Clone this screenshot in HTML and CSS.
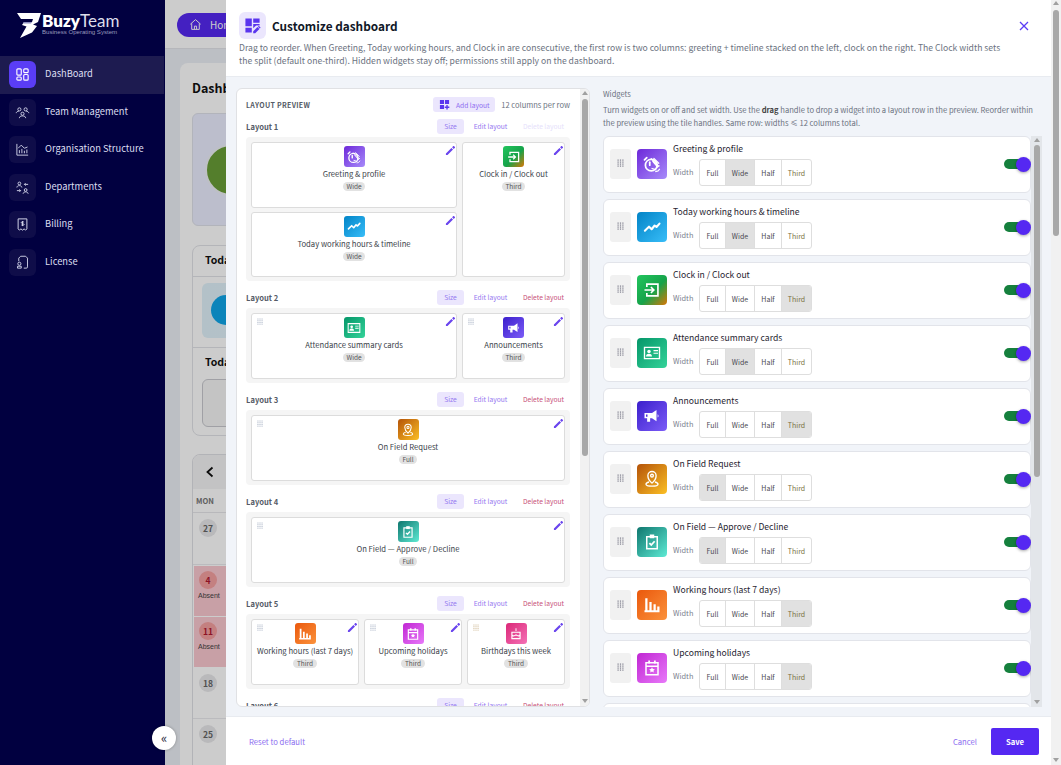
FILE: index.html
```html
<!DOCTYPE html>
<html lang="en">
<head>
<meta charset="utf-8">
<title>Customize dashboard</title>
<link rel="stylesheet" href="styles.css">
</head>
<body>
<svg class="sprite" width="0" height="0">
  <defs>
    <symbol id="i-pen" viewBox="0 0 24 24"><path fill="currentColor" d="M2 18.500V22h3.500L17.500 10l-3.500-3.500L2 18.500zM21.700 5.800a1 1 0 0 0 0-1.400l-2.100-2.100a1 1 0 0 0-1.400 0L15.500 5l3.500 3.500 2.700-2.700z"/></symbol>
    <symbol id="i-greet" viewBox="0 0 24 24"><g fill="none" stroke="currentColor" stroke-linecap="round"><circle cx="11" cy="13.500" r="7.800" stroke-width="2.300"/><path d="M9 13.500V9.500" stroke-width="2.400"/><path d="M5 3.500 2 6.500" stroke-width="2.300"/><path d="M11 5l9 9M14.500 4.500l6.500 6.500M13 8.500l6.500 7.500M12 18l5 1.500M19 16l2.500-1.500M17 22c2 0 4-1 5-3" stroke-width="1.700"/></g></symbol>
    <symbol id="i-trend" viewBox="0 0 24 24"><path fill="none" stroke="currentColor" stroke-width="2.800" stroke-linecap="round" stroke-linejoin="round" d="M2.500 17l5.500-5.500 3.500 3.500 4-5 2.500 2 4-4.500"/></symbol>
    <symbol id="i-in" viewBox="0 0 24 24"><path fill="currentColor" d="M4 3h17v18H4v-5h2.200v2.800h12.600V5.200H6.200V8H4V3zm7.300 4.300L16 12l-4.700 4.700-1.500-1.500 2.100-2.100H2v-2.200h9.900L9.800 8.800l1.500-1.500z"/></symbol>
    <symbol id="i-card" viewBox="0 0 24 24"><path fill="none" stroke="currentColor" stroke-width="1.800" d="M2 4.500h20v15H2z"/><circle cx="8" cy="10" r="2.300" fill="currentColor"/><path fill="currentColor" d="M4 16.500c0-2.500 2-3.500 4-3.500s4 1 4 3.500H4zM14 8h6v1.600h-6zM14 11.500h6v1.600h-6z"/></symbol>
    <symbol id="i-mega" viewBox="0 0 24 24"><path fill="currentColor" d="M2 8h10l6-4v15l-6-4H9.500v4.500H5.500V15H2V8zm17.500 1.500c1.600 1 1.600 3.500 0 4.500V9.500z"/><path fill="#4f2ee0" d="M4 10h2v3H4z"/></symbol>
    <symbol id="i-pin" viewBox="0 0 24 24"><g fill="none" stroke="currentColor" stroke-width="1.800"><path d="M12 17.500S6.500 12.500 6.500 7.500a5.500 5.500 0 0 1 11 0c0 5-5.500 10-5.500 10z"/><circle cx="12" cy="7.500" r="1.800"/><path d="M8 16c-2.500.6-4 1.500-4 3 0 1.500 3 2.500 8 2.500s8-1 8-2.500c0-1.500-1.500-2.400-4-3"/></g></symbol>
    <symbol id="i-clip" viewBox="0 0 24 24"><path fill="none" stroke="currentColor" stroke-width="2" d="M5 5h14v16H5z"/><path fill="currentColor" d="M9 2h6v5H9z"/><path fill="none" stroke="currentColor" stroke-width="2.400" d="M8.500 13.500l2.500 2.500 4.500-5"/></symbol>
    <symbol id="i-bars" viewBox="0 0 24 24"><path fill="currentColor" d="M3 3h3v16H3zM8.500 8h3v11h-3zM14 11h3v8h-3zM2 19h20v2.500H2zM19 14h3v5h-3z"/></symbol>
    <symbol id="i-cal" viewBox="0 0 24 24"><path fill="none" stroke="currentColor" stroke-width="2" d="M4 5h16v16H4zM4 9.500h16"/><path fill="currentColor" d="M7 2h2.400v4H7zM14.600 2H17v4h-2.400zM12 11l1.200 2.400 2.600.3-1.900 1.800.5 2.600-2.400-1.300-2.400 1.300.5-2.600-1.900-1.800 2.600-.3z"/></symbol>
    <symbol id="i-cake" viewBox="0 0 24 24"><path fill="currentColor" d="M11.200 2h1.600v5h-1.600zM4 8h16v13H4zm2 2v3.500c1.500 1 2.500 1 4 0s2.500-1 4 0 2.500 1 4 0V10H6zm0 6v3h12v-3c-1.500.6-2.500.5-4-.4s-2.500-.9-4 0-2.500 1-4 .4z"/></symbol>
    <symbol id="i-grip" viewBox="0 0 7 8"><g fill="currentColor"><rect x="0.500" y="0.500" width="1.200" height="1.200"/><rect x="2.900" y="0.500" width="1.200" height="1.200"/><rect x="5.300" y="0.500" width="1.200" height="1.200"/><rect x="0.500" y="2.500" width="1.200" height="1.200"/><rect x="2.900" y="2.500" width="1.200" height="1.200"/><rect x="5.300" y="2.500" width="1.200" height="1.200"/><rect x="0.500" y="4.500" width="1.200" height="1.200"/><rect x="2.900" y="4.500" width="1.200" height="1.200"/><rect x="5.300" y="4.500" width="1.200" height="1.200"/><rect x="0.500" y="6.500" width="1.200" height="1.200"/><rect x="2.900" y="6.500" width="1.200" height="1.200"/><rect x="5.300" y="6.500" width="1.200" height="1.200"/></g></symbol>
    <symbol id="i-grid" viewBox="0 0 24 24"><path fill="currentColor" d="M2 2h9v9H2zM13 2h9v9h-9zM2 13h9v9H2zM16 13h3v3.500h3.500v3H19V23h-3v-3.500h-3.500v-3H16z"/></symbol>
  </defs>
</svg>

<div class="app">
  <aside class="sidebar">
    <div class="logo">
      <svg class="logo-mark" viewBox="0 0 24 25"><path fill="#fff" d="M0 0h24l-3 9-5 2.500 4 1.500-5 6.500L3 25l6.500-11.500L5 12l2-3h8l1-3H4z"/><path fill="#8e8fc0" d="M7 9h8l-1 1.600H6z"/></svg>
      <div class="logo-text">
        <div class="logo-name"><b>Buzy</b>Team</div>
        <div class="logo-sub">Business Operating System</div>
      </div>
    </div>
    <nav class="nav">
      <a class="nav-item active"><span class="nav-ico"><svg viewBox="0 0 24 24" fill="none" stroke="currentColor" stroke-width="1.800"><rect x="3" y="3" width="7" height="10" rx="1.500"/><rect x="14" y="3" width="7" height="6" rx="1.500"/><rect x="3" y="16" width="7" height="5" rx="1.500"/><rect x="14" y="12" width="7" height="9" rx="1.500"/></svg></span><span class="nav-label">DashBoard</span></a>
      <a class="nav-item"><span class="nav-ico"><svg viewBox="0 0 24 24" fill="none" stroke="currentColor" stroke-width="1.500"><circle cx="7" cy="7" r="2.500"/><circle cx="17" cy="7" r="2.500"/><circle cx="12" cy="14" r="2.500"/><path d="M2 13c0-2 2-3 4-3M22 13c0-2-2-3-4-3M7 21c0-2.500 2-3.500 5-3.500s5 1 5 3.500"/></svg></span><span class="nav-label">Team Management</span></a>
      <a class="nav-item"><span class="nav-ico"><svg viewBox="0 0 24 24" fill="none" stroke="currentColor" stroke-width="1.500"><path d="M3 3v18h18"/><path d="M7 18v-5M11 18v-7M15 18v-4M19 18v-6"/><path d="M5 10l5-5 5 5 5-2"/></svg></span><span class="nav-label">Organisation Structure</span></a>
      <a class="nav-item"><span class="nav-ico"><svg viewBox="0 0 24 24" fill="none" stroke="currentColor" stroke-width="1.500"><circle cx="7" cy="5.500" r="2.200"/><circle cx="17" cy="16" r="2.200"/><path d="M3 12c0-2 2-3 4-3s4 1 4 3M13 22c0-2 2-3 4-3s4 1 4 3M15 7h6M15 7l2-2M15 7l2 2M3 17h6M9 17l-2-2M9 17l-2 2"/></svg></span><span class="nav-label">Departments</span></a>
      <a class="nav-item"><span class="nav-ico"><svg viewBox="0 0 24 24" fill="none" stroke="currentColor" stroke-width="1.600"><path d="M5 3h14v16l-2 2-2.500-2-2.500 2-2.500-2L7 21l-2-2z"/><path d="M14.500 8.500c-.5-1-4.500-1.500-4.500.5s4.500 1 4.500 3-4 1.500-4.500.5M12 6.500v8"/></svg></span><span class="nav-label">Billing</span></a>
      <a class="nav-item"><span class="nav-ico"><svg viewBox="0 0 24 24" fill="none" stroke="currentColor" stroke-width="1.500"><path d="M6 10V5l3-3h8l3 3v14a2 2 0 0 1-2 2h-4"/><circle cx="7" cy="14" r="2.500"/><path d="M4 21v-3h6v3z"/></svg></span><span class="nav-label">License</span></a>
    </nav>
    <button class="collapse">«</button>
  </aside>

  <main class="page">
    <div class="topbar"><span class="home-pill"><svg viewBox="0 0 24 24" fill="none" stroke="currentColor" stroke-width="1.800"><path d="M2.500 11.500 12 3l9.500 8.500M5 10v11h14V10M10 21v-6h4v6"/></svg>Home</span></div>
    <section class="dash">
      <h2 class="dash-title">Dashboard</h2>
      <div class="dash-hero"><span class="avatar"></span></div>
      <div class="today-card">
        <div class="today-head">Today</div>
        <div class="today-body"><div class="today-inner"><span class="today-circle"></span></div></div>
        <div class="today-head two">Today</div>
        <div class="today-box"></div>
      </div>
      <div class="calendar">
        <div class="cal-nav"><svg viewBox="0 0 12 12" fill="none" stroke="currentColor" stroke-width="1.800"><path d="M8.500 1.500 3.500 6l5 4.500"/></svg></div>
        <div class="cal-dow">MON</div>
        <div class="cal-cell"><span class="day">27</span></div>
        <div class="cal-cell absent"><span class="day">4</span><small>Absent</small></div>
        <div class="cal-cell absent"><span class="day">11</span><small>Absent</small></div>
        <div class="cal-cell"><span class="day">18</span></div>
        <div class="cal-cell"><span class="day">25</span></div>
      </div>
    </section>
  </main>
</div>

<div class="scrim"></div>

<aside class="drawer">
  <header class="dr-head">
    <div class="dr-title-row">
      <span class="dr-badge"><svg viewBox="0 0 24 24"><path fill="currentColor" d="M2 2h9v11H2zM13 2h9v6h-9zM2 15h9v7H2zM13 10h9v2h-5l-4 4z"/><path fill="currentColor" d="M13 20.200V23h2.800l6-6-2.800-2.800zM23 15.600a.8.800 0 0 0 0-1.100l-1.500-1.500a.8.800 0 0 0-1.100 0l-.7.700 2.600 2.600z"/></svg></span>
      <h1 class="dr-title">Customize dashboard</h1>
      <button class="dr-close"><svg viewBox="0 0 12 12" stroke="currentColor" stroke-width="1.300"><path d="M2 2l8 8M10 2l-8 8"/></svg></button>
    </div>
    <p class="dr-desc">Drag to reorder. When Greeting, Today working hours, and Clock in are consecutive, the first row is two columns: greeting + timeline stacked on the left, clock on the right. The Clock width sets the split (default one-third). Hidden widgets stay off; permissions still apply on the dashboard.</p>
  </header>

  <div class="dr-body">
    <section class="preview">
      <div class="preview-scroll">
        <div class="pv-head">
          <span class="pv-title">LAYOUT PREVIEW</span>
          <button class="add-layout"><svg viewBox="0 0 24 24"><use href="#i-grid"/></svg>Add layout</button>
          <span class="pv-cols">12 columns per row</span>
        </div>

        <div class="ly-head"><b>Layout 1</b><span class="ly-size">Size</span><span class="ly-edit">Edit layout</span><span class="ly-del off">Delete layout</span></div>
        <div class="ly-row ly-first">
          <div class="tile t-a"><svg class="pen"><use href="#i-pen"/></svg><span class="ico g-purple"><svg><use href="#i-greet"/></svg></span><span class="tn">Greeting &amp; profile</span><span class="tag">Wide</span></div>
          <div class="tile t-c"><svg class="pen"><use href="#i-pen"/></svg><span class="ico g-green"><svg><use href="#i-in"/></svg></span><span class="tn">Clock in / Clock out</span><span class="tag">Third</span></div>
          <div class="tile t-b"><svg class="pen"><use href="#i-pen"/></svg><span class="ico g-blue"><svg><use href="#i-trend"/></svg></span><span class="tn">Today working hours &amp; timeline</span><span class="tag">Wide</span></div>
        </div>

        <div class="ly-head"><b>Layout 2</b><span class="ly-size">Size</span><span class="ly-edit">Edit layout</span><span class="ly-del">Delete layout</span></div>
        <div class="ly-row cols-2">
          <div class="tile"><svg class="grip"><use href="#i-grip"/></svg><svg class="pen"><use href="#i-pen"/></svg><span class="ico g-emerald"><svg><use href="#i-card"/></svg></span><span class="tn">Attendance summary cards</span><span class="tag">Wide</span></div>
          <div class="tile"><svg class="grip"><use href="#i-grip"/></svg><svg class="pen"><use href="#i-pen"/></svg><span class="ico g-indigo"><svg><use href="#i-mega"/></svg></span><span class="tn">Announcements</span><span class="tag">Third</span></div>
        </div>

        <div class="ly-head"><b>Layout 3</b><span class="ly-size">Size</span><span class="ly-edit">Edit layout</span><span class="ly-del">Delete layout</span></div>
        <div class="ly-row">
          <div class="tile"><svg class="grip"><use href="#i-grip"/></svg><svg class="pen"><use href="#i-pen"/></svg><span class="ico g-amber"><svg><use href="#i-pin"/></svg></span><span class="tn">On Field Request</span><span class="tag">Full</span></div>
        </div>

        <div class="ly-head"><b>Layout 4</b><span class="ly-size">Size</span><span class="ly-edit">Edit layout</span><span class="ly-del">Delete layout</span></div>
        <div class="ly-row">
          <div class="tile"><svg class="grip"><use href="#i-grip"/></svg><svg class="pen"><use href="#i-pen"/></svg><span class="ico g-teal"><svg><use href="#i-clip"/></svg></span><span class="tn">On Field — Approve / Decline</span><span class="tag">Full</span></div>
        </div>

        <div class="ly-head"><b>Layout 5</b><span class="ly-size">Size</span><span class="ly-edit">Edit layout</span><span class="ly-del">Delete layout</span></div>
        <div class="ly-row cols-3">
          <div class="tile"><svg class="grip"><use href="#i-grip"/></svg><svg class="pen"><use href="#i-pen"/></svg><span class="ico g-orange"><svg><use href="#i-bars"/></svg></span><span class="tn">Working hours (last 7 days)</span><span class="tag">Third</span></div>
          <div class="tile"><svg class="grip"><use href="#i-grip"/></svg><svg class="pen"><use href="#i-pen"/></svg><span class="ico g-magenta"><svg><use href="#i-cal"/></svg></span><span class="tn">Upcoming holidays</span><span class="tag">Third</span></div>
          <div class="tile"><svg class="grip grip-amber"><use href="#i-grip"/></svg><svg class="pen"><use href="#i-pen"/></svg><span class="ico g-pink"><svg><use href="#i-cake"/></svg></span><span class="tn">Birthdays this week</span><span class="tag">Third</span></div>
        </div>

        <div class="ly-head"><b>Layout 6</b><span class="ly-size">Size</span><span class="ly-edit">Edit layout</span><span class="ly-del">Delete layout</span></div>
      </div>
      <div class="sb sb-preview"><i class="arr up"></i><span class="thumb"></span><i class="arr down"></i></div>
    </section>

    <section class="widgets">
      <div class="w-title">Widgets</div>
      <p class="w-desc">Turn widgets on or off and set width. Use the <b>drag</b> handle to drop a widget into a layout row in the preview. Reorder within the preview using the tile handles. Same row: widths ≤ 12 columns total.</p>
      <div class="w-wrap">
        <div class="w-list">
          <div class="w-card"><span class="w-grip"><svg><use href="#i-grip"/></svg></span><span class="w-ico g-purple"><svg><use href="#i-greet"/></svg></span><div class="w-main"><div class="w-name">Greeting &amp; profile</div><div class="w-width"><span class="w-label">Width</span><div class="seg"><span>Full</span><span class="on">Wide</span><span>Half</span><span class="third">Third</span></div></div></div><span class="switch"></span></div>
          <div class="w-card"><span class="w-grip"><svg><use href="#i-grip"/></svg></span><span class="w-ico g-blue"><svg><use href="#i-trend"/></svg></span><div class="w-main"><div class="w-name">Today working hours &amp; timeline</div><div class="w-width"><span class="w-label">Width</span><div class="seg"><span>Full</span><span class="on">Wide</span><span>Half</span><span class="third">Third</span></div></div></div><span class="switch"></span></div>
          <div class="w-card"><span class="w-grip"><svg><use href="#i-grip"/></svg></span><span class="w-ico g-green"><svg><use href="#i-in"/></svg></span><div class="w-main"><div class="w-name">Clock in / Clock out</div><div class="w-width"><span class="w-label">Width</span><div class="seg"><span>Full</span><span>Wide</span><span>Half</span><span class="third on">Third</span></div></div></div><span class="switch"></span></div>
          <div class="w-card"><span class="w-grip"><svg><use href="#i-grip"/></svg></span><span class="w-ico g-emerald"><svg><use href="#i-card"/></svg></span><div class="w-main"><div class="w-name">Attendance summary cards</div><div class="w-width"><span class="w-label">Width</span><div class="seg"><span>Full</span><span class="on">Wide</span><span>Half</span><span class="third">Third</span></div></div></div><span class="switch"></span></div>
          <div class="w-card"><span class="w-grip"><svg><use href="#i-grip"/></svg></span><span class="w-ico g-indigo"><svg><use href="#i-mega"/></svg></span><div class="w-main"><div class="w-name">Announcements</div><div class="w-width"><span class="w-label">Width</span><div class="seg"><span>Full</span><span>Wide</span><span>Half</span><span class="third on">Third</span></div></div></div><span class="switch"></span></div>
          <div class="w-card"><span class="w-grip"><svg><use href="#i-grip"/></svg></span><span class="w-ico g-amber"><svg><use href="#i-pin"/></svg></span><div class="w-main"><div class="w-name">On Field Request</div><div class="w-width"><span class="w-label">Width</span><div class="seg"><span class="on">Full</span><span>Wide</span><span>Half</span><span class="third">Third</span></div></div></div><span class="switch"></span></div>
          <div class="w-card"><span class="w-grip"><svg><use href="#i-grip"/></svg></span><span class="w-ico g-teal"><svg><use href="#i-clip"/></svg></span><div class="w-main"><div class="w-name">On Field — Approve / Decline</div><div class="w-width"><span class="w-label">Width</span><div class="seg"><span class="on">Full</span><span>Wide</span><span>Half</span><span class="third">Third</span></div></div></div><span class="switch"></span></div>
          <div class="w-card"><span class="w-grip"><svg><use href="#i-grip"/></svg></span><span class="w-ico g-orange"><svg><use href="#i-bars"/></svg></span><div class="w-main"><div class="w-name">Working hours (last 7 days)</div><div class="w-width"><span class="w-label">Width</span><div class="seg"><span>Full</span><span>Wide</span><span>Half</span><span class="third on">Third</span></div></div></div><span class="switch"></span></div>
          <div class="w-card"><span class="w-grip"><svg><use href="#i-grip"/></svg></span><span class="w-ico g-magenta"><svg><use href="#i-cal"/></svg></span><div class="w-main"><div class="w-name">Upcoming holidays</div><div class="w-width"><span class="w-label">Width</span><div class="seg"><span>Full</span><span>Wide</span><span>Half</span><span class="third on">Third</span></div></div></div><span class="switch"></span></div>
          <div class="w-card"></div>
        </div>
        <div class="sb sb-list"><i class="arr up"></i><span class="thumb"></span><i class="arr down"></i></div>
      </div>
    </section>
  </div>

  <footer class="dr-foot">
    <a class="reset">Reset to default</a>
    <span class="foot-right"><a class="cancel">Cancel</a><button class="save">Save</button></span>
  </footer>
</aside>
<div class="sb sb-page"><i class="arr up"></i><span class="thumb"></span><i class="arr down"></i></div>
</body>
</html>
```

FILE: styles.css
```css
* { box-sizing: border-box; }
html, body { margin: 0; height: 100%; overflow: hidden; }
body { font-family: "Noto Sans CJK SC", "Noto Sans", sans-serif; color: #1a1a2e; background: #fff; }
.sprite { position: absolute; }
button { font-family: inherit; border: 0; }
p, h1, h2 { margin: 0; }

/* background application */
.app { display: flex; height: 765px; overflow: hidden; }
.sidebar { width: 165px; background: #010040; color: #e6e7f2; flex: none; position: relative; z-index: 5; }
.logo { display: flex; height: 56px; padding: 13px 0 0 17px; align-items: flex-start; }
.logo-mark { width: 24px; height: 25px; flex: none; }
.logo-text { margin-left: 1px; }
.logo-name { font: 400 17px/15px "Lato", sans-serif; color: #dddeea; white-space: nowrap; }
.logo-name b { font-weight: 800; color: #fff; }
.logo-sub { font: 400 6.100px/8px "Liberation Sans", sans-serif; color: #9a9bbd; white-space: nowrap; }
.nav-item { display: flex; align-items: center; gap: 9px; height: 37.500px; padding-left: 9px; font-size: 9.330px; color: #dcdef0; }
.nav-label { padding-bottom: 3px; }
.nav-item.active { background: #1d1b50; margin-right: 1px; }
.nav-ico { width: 27px; height: 27px; border-radius: 6px; background: #0f0d49; display: flex; align-items: center; justify-content: center; color: #cfd1e6; flex: none; }
.nav-ico svg { width: 15px; height: 15px; }
.active .nav-ico { background: #5a3df5; color: #fff; }
.collapse { position: absolute; right: -11px; top: 726px; width: 24px; height: 24px; border-radius: 50%; background: #fff; color: #2a2a3a; font-size: 13px; line-height: 20px; padding: 0; box-shadow: 0 0 3px rgba(0,0,0,.3); }

.page { flex: 1; background: #eceff6; min-width: 0; overflow: hidden; }
.topbar { height: 49px; padding: 12px; background: #fff; border-bottom: 1px solid #e4e5ea; }
.home-pill { display: inline-flex; align-items: center; gap: 8px; height: 24px; padding: 0 18px 0 12px; background: #5528f2; color: #fff; border-radius: 12px; font-size: 10px; }
.home-pill svg { width: 13px; height: 13px; }
.dash { margin: 14px 0 0 15px; background: #fff; border-radius: 8px 0 0 0; height: 702px; padding: 14px 12px; }
.dash-title { margin: 0 0 14px; font-size: 12.500px; font-weight: 700; line-height: 22px; color: #111; }
.dash-hero { height: 113px; background: #ebeeff; border: 1px solid #dfe1ea; border-radius: 6px; padding: 30px 12px; margin-bottom: 19px; }
.avatar { display: block; width: 52px; height: 52px; border-radius: 50%; background: #6a9e38; border: 2px solid #eef0f5; }
.today-card { height: 191px; border: 1px solid #e2e3e8; border-radius: 8px; }
.today-head { height: 31px; padding: 0 12px; font-size: 10.500px; font-weight: 700; line-height: 28px; color: #111; border-bottom: 1px solid #e2e3e8; }
.today-body { height: 71px; padding: 6px 0 9px 9px; border-bottom: 1px solid #e2e3e8; }
.today-inner { height: 55px; padding: 12px 9px; background: linear-gradient(90deg, #e0f2fa, #eef6fa); border-radius: 6px 0 0 6px; }
.today-circle { display: block; width: 30px; height: 30px; border-radius: 50%; background: #0ea5e9; }
.today-head.two { height: 31px; border: 0; }
.today-box { height: 48px; margin-left: 9px; border: 1px solid #c8c9cf; border-radius: 6px 0 0 6px; background: #f6f6f6; }
.calendar { margin-top: 18px; border: 1px solid #dfe0e5; border-radius: 8px 0 0 0; overflow: hidden; }
.cal-nav { height: 34px; background: #f4f4f6; display: flex; align-items: center; padding-left: 11px; color: #111; }
.cal-nav svg { width: 12px; height: 12px; }
.cal-dow { height: 24px; font: 700 7.500px/24px "Noto Sans CJK SC", sans-serif; padding-left: 3px; color: #777; border-bottom: 1px solid #e6e6ea; }
.cal-cell { height: 51.500px; padding: 6px 6px; border-bottom: 1px solid #eaeaee; }
.day { display: flex; align-items: center; justify-content: center; width: 18px; height: 18px; border-radius: 50%; background: #e8e8ea; font-size: 8.500px; font-weight: 700; color: #666; }
.absent { background: #fbc8d0; margin: 1px 0 1px 1px; height: 50px; padding: 5px 5px; border: 0; }
.absent .day { background: #f5a0a0; color: #b01830; }
.absent small { display: block; font: 400 7px/12px "Liberation Sans", sans-serif; color: #444; margin: 1px 0 0 -1px; }

.scrim { position: absolute; left: 165px; top: 0; right: 0; bottom: 0; background: rgba(0,0,0,.2); z-index: 2; }

/* drawer */
.drawer { position: absolute; left: 226px; top: 0; width: 825px; height: 765px; background: #fff; z-index: 3; display: flex; flex-direction: column; }
.dr-head { height: 77px; flex: none; padding: 12px 13px 0; background: #fff; border-bottom: 1px solid #e8ebf0; }
.dr-title-row { display: flex; align-items: center; gap: 6px; height: 27px; }
.dr-badge { width: 27px; height: 27px; border-radius: 6px; background: #ebe6fd; display: flex; align-items: center; justify-content: center; color: #5a35ee; flex: none; }
.dr-badge svg { width: 17px; height: 17px; }
.dr-title { flex: 1; font-size: 11.800px; font-weight: 700; color: #111827; line-height: 27px; }
.dr-close { width: 12px; height: 12px; padding: 0; background: none; color: #5a3df5; margin-right: 8px; }
.dr-close svg { display: block; width: 12px; height: 12px; }
.dr-desc { max-width: 770px; margin-top: 2px; font-size: 8.630px; line-height: 13px; color: #6b7280; }

.dr-body { flex: 1; min-height: 0; display: flex; gap: 13px; padding: 11px 9px 9px 10px; background: #f1f4f9; }

/* fake classic scrollbars */
.sb { display: flex; flex-direction: column; align-items: center; flex: none; background: #f1f1f1; }
.thumb { display: block; width: 6px; background: #a8a8a8; border-radius: 3px; }
.arr { display: block; width: 0; height: 0; border-left: 3px solid transparent; border-right: 3px solid transparent; }
.arr.up { border-bottom: 4px solid #a0a0a0; margin-top: 2px; }
.arr.down { border-top: 4px solid #a0a0a0; margin-top: auto; margin-bottom: 3px; }
.sb-preview { width: 9px; }
.sb-preview .thumb { height: 357px; margin-top: 4px; }
.sb-list { width: 11px; background: #e3e6ea; }
.sb-list .thumb { height: 332px; margin-top: 3px; }
.sb-page { position: absolute; right: 0; top: 0; width: 10px; height: 765px; z-index: 4; }
.sb-page .thumb { height: 226px; margin-top: 5px; }
.sb-page .arr.up { margin-top: 1px; }

/* preview */
.preview { width: 354px; flex: none; background: #fff; border: 1px solid #e0e1e4; border-radius: 6px; display: flex; overflow: hidden; }
.preview-scroll { flex: 1; min-width: 0; padding: 8px 10px 0 9px; overflow: hidden; }
.pv-head { display: flex; align-items: center; height: 15px; margin-bottom: 7px; }
.pv-title { flex: 1; font-size: 7px; font-weight: 700; letter-spacing: .3px; color: #555b66; }
.add-layout { display: flex; align-items: center; gap: 6px; width: 62px; height: 15px; padding: 0 0 0 6px; border-radius: 3px; background: #ebe6fd; color: #8b6cf0; font-size: 6.700px; white-space: nowrap; }
.add-layout svg { width: 11px; height: 11px; color: #5a35ee; flex: none; }
.pv-cols { width: 75px; text-align: right; font-size: 7.550px; color: #6b7280; white-space: nowrap; }

.ly-head { display: flex; align-items: center; height: 15px; margin-bottom: 3px; font-size: 6.700px; }
.ly-head b { flex: 1; font-size: 7.600px; line-height: 13px; font-weight: 700; color: #555b66; }
.ly-head span { text-align: center; height: 15px; line-height: 14px; white-space: nowrap; }
.ly-size { width: 27px; background: #ebe6fd; border-radius: 3px; color: #9478f0; }
.ly-edit { width: 53px; color: #9478f0; }
.ly-del { width: 53px; color: #c8527a; }
.ly-del.off { color: #e6dffb; }

.ly-row { display: grid; grid-template-columns: 1fr; gap: 4px 5px; padding: 5px 5px 4px; background: #f5f5f5; border-radius: 4px; margin-bottom: 9px; }
.ly-first { grid-template-columns: 2fr 1fr; }
.cols-2 { grid-template-columns: 2fr 1fr; }
.cols-3 { grid-template-columns: 108fr 98fr 98fr; }
.t-a { grid-column: 1; grid-row: 1; }
.t-b { grid-column: 1; grid-row: 2; }
.t-c { grid-column: 2; grid-row: 1 / span 2; }
.tile { position: relative; height: 66px; display: flex; flex-direction: column; align-items: center; padding-top: 3px; background: #fff; border: 1px solid #dcdcdc; border-radius: 3px; min-width: 0; }
.ly-first .tile { height: 65.500px; }
.ly-first .t-c { height: auto; }
.ico { width: 21px; height: 21px; border-radius: 3px; display: flex; align-items: center; justify-content: center; color: #fff; flex: none; }
.ico svg { width: 14px; height: 14px; }
.tn { font-size: 7.700px; line-height: 13px; color: #3b3f4a; white-space: nowrap; }
.tag { margin-top: 2px; height: 9px; padding: 0 3.500px; border-radius: 5px; background: #e2e2e2; font-size: 6.500px; line-height: 8px; color: #555; }
.pen { position: absolute; top: 2px; right: 0; width: 11px; height: 11px; color: #6a45ee; }
.grip { position: absolute; top: 4px; left: 5px; width: 6px; height: 7px; color: #aab4c6; }
.grip-amber { color: #d0bc9a; }

/* widgets */
.widgets { flex: 1; min-width: 0; display: flex; flex-direction: column; }
.w-title { height: 11px; font-size: 7.500px; line-height: 11px; color: #6b7280; }
.w-desc { margin-top: 4px; height: 26px; font-size: 7.600px; line-height: 13px; color: #6b7280; }
.w-desc b { font-weight: 700; color: #444; }
.w-wrap { display: flex; margin-top: 7px; height: 571px; overflow: hidden; }
.w-list { flex: 1; min-width: 0; display: flex; flex-direction: column; gap: 6px; overflow: hidden; }
.w-card { position: relative; flex: none; height: 57px; display: flex; align-items: flex-start; padding: 12px 6px; background: #fff; border: 1px solid #e2e4ea; border-radius: 6px; }
.w-grip { width: 21px; height: 30px; background: #f1f1f1; border-radius: 3px; display: flex; align-items: center; justify-content: center; color: #7f7f8e; flex: none; }
.w-grip svg { width: 7px; height: 8px; margin-bottom: 2px; }
.w-ico { width: 30px; height: 30px; margin-left: 6px; border-radius: 4px; display: flex; align-items: center; justify-content: center; color: #fff; flex: none; }
.w-ico svg { width: 18px; height: 18px; }
.w-main { margin: -7px 0 0 6px; width: 139px; }
.w-name { font-size: 8.600px; line-height: 13px; color: #1f2430; white-space: nowrap; }
.w-width { display: flex; align-items: center; justify-content: space-between; margin-top: 4px; font-size: 7.400px; color: #7a808c; }
.w-label { padding-bottom: 2px; }
.seg { display: flex; width: 113px; height: 27px; border: 1px solid #dedede; border-radius: 3px; overflow: hidden; font-size: 7px; color: #4a4a52; }
.seg span { width: 26px; display: flex; align-items: center; justify-content: center; border-right: 1px solid #dedede; }
.seg span:nth-child(2) { width: 29px; }
.seg span:nth-child(3) { width: 27px; }
.seg span:last-child { flex: 1; border-right: 0; }
.seg .third { color: #7a7040; }
.seg .on { background: #e1e1e1; }
.switch { position: absolute; left: 400px; top: 22px; width: 22px; height: 10px; border-radius: 5px; background: #15803d; }
.switch::after { content: ""; position: absolute; right: -5px; top: -2px; width: 15px; height: 15px; border-radius: 50%; background: #5528f2; box-shadow: 0 1px 3px rgba(0,0,0,.35); }

.dr-foot { height: 49px; flex: none; display: flex; align-items: center; justify-content: space-between; padding: 0 12px 0 23px; background: #fff; border-top: 1px solid #e8ebf0; font-size: 7.700px; }
.reset, .cancel { color: #8b6cf0; }
.foot-right { display: flex; align-items: center; gap: 14px; }
.save { width: 48px; height: 27px; border-radius: 2px; background: #5528f2; color: #fff; font-size: 7.700px; font-weight: 700; }

/* gradients */
.g-purple { background: linear-gradient(135deg, #6d28d9, #a78bfa); }
.g-blue { background: linear-gradient(135deg, #0284c7, #38bdf8); }
.g-green { background: linear-gradient(135deg, #22c55e 0%, #16a34a 55%, #d97706 100%); }
.g-emerald { background: linear-gradient(135deg, #059669, #34d399); }
.g-indigo { background: linear-gradient(135deg, #3b1fcc, #7c5cf7); }
.g-amber { background: linear-gradient(135deg, #b45309, #fbbf24); }
.g-teal { background: linear-gradient(135deg, #0f766e, #5eead4); }
.g-orange { background: linear-gradient(135deg, #ea580c, #fb923c); }
.g-magenta { background: linear-gradient(135deg, #c026d3, #e879f9); }
.g-pink { background: linear-gradient(135deg, #db2777, #f472b6); }
```
